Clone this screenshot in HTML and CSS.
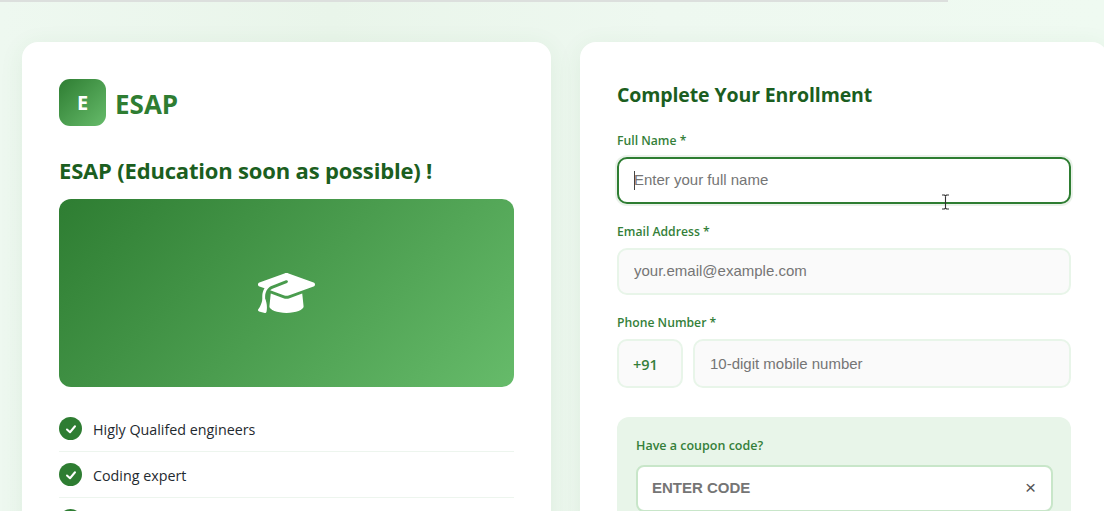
FILE: index.html
```html
<!DOCTYPE html>
<html lang="en">
<head>
<meta charset="utf-8">
<title>ESAP Enrollment</title>
<link rel="stylesheet" href="styles.css">
</head>
<body>
<div class="topbar"></div>
<main class="page">
  <section class="card info">
    <div class="brand">
      <div class="brand-mark">E</div>
      <div class="brand-name">ESAP</div>
    </div>
    <h2 class="course-title">ESAP (Education soon as possible) !</h2>
    <div class="hero">
      <svg class="cap" viewBox="0 0 640 512" width="57" height="46" aria-hidden="true">
        <path fill="#fff" d="M320 32c-8.100 0-16.100 1.400-23.700 4.100L15.800 137.400C6.300 140.900 0 149.900 0 160s6.300 19.100 15.800 22.600l57.900 20.900C57.300 229.300 48 259.800 48 291.900v28.100c0 28.400-10.800 57.700-22.300 80.800c-6.500 13-13.900 25.800-22.500 37.700C0 442.700-.9 448.300 .9 453.400s6 8.900 11.200 10.200l64 16c4.200 1.100 8.700 .3 12.400-2s6.300-6.100 7.100-10.400c8.600-42.800 4.300-81.200-2.100-108.700C90.300 344.300 86 329.800 80 316.500V291.900c0-30.200 10.200-58.700 27.900-81.500c12.900-15.500 29.600-28 49.200-35.700l157-61.700c8.200-3.200 17.500 .8 20.700 9s-.8 17.500-9 20.700l-157 61.700c-12.400 4.900-23.300 12.400-32.200 21.600l159.600 57.600c7.600 2.700 15.600 4.100 23.700 4.100s16.100-1.400 23.700-4.100L624.200 182.600c9.500-3.400 15.800-12.500 15.800-22.600s-6.300-19.100-15.800-22.600L343.700 36.100C336.100 33.400 328.100 32 320 32zM128 408c0 35.300 86 72 192 72s192-36.700 192-72L496.700 262.600 354.500 314c-11.100 4-22.800 6-34.500 6s-23.500-2-34.500-6L143.300 262.600 128 408z"/>
      </svg>
    </div>
    <ul class="features">
      <li class="feature"><span class="tick"><svg viewBox="0 0 24 24" width="12" height="12" aria-hidden="true"><path d="M4 13 L10 18.500 L20 6.500" fill="none" stroke="#fff" stroke-width="4" stroke-linecap="round" stroke-linejoin="round"/></svg></span><span class="feature-text">Higly Qualifed engineers</span></li>
      <li class="feature"><span class="tick"><svg viewBox="0 0 24 24" width="12" height="12" aria-hidden="true"><path d="M4 13 L10 18.500 L20 6.500" fill="none" stroke="#fff" stroke-width="4" stroke-linecap="round" stroke-linejoin="round"/></svg></span><span class="feature-text">Coding expert</span></li>
      <li class="feature"><span class="tick"></span></li>
    </ul>
  </section>

  <section class="card form">
    <h2 class="form-title">Complete Your Enrollment</h2>

    <div class="field">
      <label class="label" for="name">Full Name *</label>
      <div class="focus-wrap">
        <input class="input input-focus" id="name" type="text" placeholder="Enter your full name">
        <span class="caret"></span>
      </div>
    </div>

    <div class="field">
      <label class="label" for="email">Email Address *</label>
      <input class="input" id="email" type="text" placeholder="your.email@example.com">
    </div>

    <div class="field field-phone">
      <label class="label" for="phone">Phone Number *</label>
      <div class="phone-row">
        <div class="prefix">+91</div>
        <input class="input input-phone" id="phone" type="text" placeholder="10-digit mobile number">
      </div>
    </div>

    <div class="coupon">
      <label class="coupon-label" for="code">Have a coupon code?</label>
      <div class="coupon-box">
        <input class="coupon-input" id="code" type="text" placeholder="ENTER CODE">
        <span class="coupon-clear">×</span>
      </div>
    </div>
  </section>
</main>
<svg class="ibeam" viewBox="0 0 9 16" width="9" height="16" aria-hidden="true">
  <path d="M1 1 H3.500 L4.500 2 L5.500 1 H8 M4.500 2 V14 M1 15 H3.500 L4.500 14 L5.500 15 H8" fill="none" stroke="#333" stroke-width="1.100"/>
</svg>
</body>
</html>
```
FILE: styles.css
```css
* { box-sizing: border-box; }

html, body {
  margin: 0;
  height: 511px;
  overflow: hidden;
}

body {
  position: relative;
  background: linear-gradient(90deg, #eef8f0 0%, #e9f5ea 30%, #eef8f0 60%, #effaf1 100%);
  font-family: "Open Sans", "Noto Sans", sans-serif;
}

.topbar {
  height: 2px;
  width: 948px;
  background: #dcdfdd;
}

.page {
  display: grid;
  grid-template-columns: 529px 528px;
  gap: 29px;
  padding: 40px 0 0 22px;
  width: 1200px;
}

.card {
  background: #fff;
  border-radius: 16px;
  padding: 37px;
  height: 700px;
  box-shadow: 0 4px 24px rgba(46, 125, 50, 0.08);
}

.brand {
  display: flex;
  align-items: center;
  gap: 9px;
  height: 47px;
}

.brand-mark {
  width: 47px;
  height: 47px;
  border-radius: 11px;
  background: linear-gradient(135deg, #2e7d32, #66bb6a);
  color: #fff;
  display: flex;
  align-items: center;
  justify-content: center;
  font-size: 20px;
  font-weight: 700;
}

.brand-name {
  padding-top: 2px;
  font-size: 26px;
  line-height: 36px;
  font-weight: 700;
  color: #2e7d32;
}

.course-title {
  margin: 26px 0 11px;
  font-size: 22px;
  line-height: 36px;
  font-weight: 700;
  color: #1b5e20;
  letter-spacing: -0.18px;
}

.hero {
  height: 188px;
  border-radius: 12px;
  background: linear-gradient(135deg, #2e7d32, #66bb6a);
  display: flex;
  align-items: center;
  justify-content: center;
}

.cap { display: block; }

.features {
  list-style: none;
  margin: 19px 0 0;
  padding: 0;
}

.feature {
  display: flex;
  align-items: center;
  gap: 11px;
  height: 46px;
  border-bottom: 1px solid #edf5ee;
  font-size: 14.300px;
  color: #1f2a30;
}

.feature-text { padding-top: 2px; }

.tick {
  width: 23px;
  height: 23px;
  border-radius: 50%;
  background: #2e7d32;
  display: flex;
  align-items: center;
  justify-content: center;
}

.form-title {
  margin: 0 0 21px;
  font-size: 19.500px;
  line-height: 32px;
  font-weight: 700;
  color: #1b5e20;
  letter-spacing: -0.12px;
}

.field { margin-bottom: 19px; }

.field-phone { margin-bottom: 29px; }

.label {
  display: block;
  margin-bottom: 8px;
  font-size: 12.200px;
  line-height: 17px;
  font-weight: 600;
  color: #357f3a;
}

.input {
  display: block;
  width: 100%;
  height: 47px;
  padding: 0 15px 2px;
  border: 2px solid #e8f5e9;
  border-radius: 10px;
  background: #fafafa;
  font-family: "Liberation Sans", Arial, sans-serif;
  font-size: 15px;
  color: #333;
  outline: none;
}

.input::placeholder { color: #757575; opacity: 1; }

.focus-wrap { position: relative; }

.input-focus {
  border-color: #2e7d32;
  background: #fff;
  box-shadow: 0 0 0 2px rgba(46, 125, 50, 0.1);
}

.caret {
  position: absolute;
  left: 17px;
  top: 14px;
  width: 1px;
  height: 19px;
  background: #444;
}

.phone-row {
  display: flex;
  gap: 10px;
}

.prefix {
  width: 66px;
  height: 49px;
  padding: 1px 0 0 14px;
  border: 2px solid #e8f5e9;
  border-radius: 10px;
  background: #fafafa;
  display: flex;
  align-items: center;
  font-size: 14.500px;
  font-weight: 600;
  color: #357f3a;
}

.input-phone {
  flex: 1;
  width: auto;
  height: 49px;
  padding-bottom: 1px;
}

.coupon {
  background: #e8f5e9;
  border-radius: 12px;
  padding: 19px 18px 18px 19px;
  height: 200px;
}

.coupon-label {
  display: block;
  margin-bottom: 9px;
  font-size: 12.500px;
  line-height: 20px;
  font-weight: 600;
  color: #357f3a;
}

.coupon-box {
  position: relative;
  height: 47px;
  border: 2px solid #c8e6c9;
  border-radius: 8px;
  background: #fff;
}

.coupon-input {
  display: block;
  width: 100%;
  height: 43px;
  padding: 0 40px 2px 14px;
  border: 0;
  border-radius: 6px;
  background: transparent;
  font-family: "Liberation Sans", Arial, sans-serif;
  font-size: 15px;
  font-weight: 700;
  outline: none;
}

.coupon-input::placeholder { color: #757575; opacity: 1; }

.coupon-clear {
  position: absolute;
  right: 15px;
  top: 9px;
  font-family: "Liberation Sans", Arial, sans-serif;
  font-size: 19px;
  line-height: 24px;
  color: #555;
}

.ibeam {
  position: absolute;
  left: 941px;
  top: 194px;
}
```
